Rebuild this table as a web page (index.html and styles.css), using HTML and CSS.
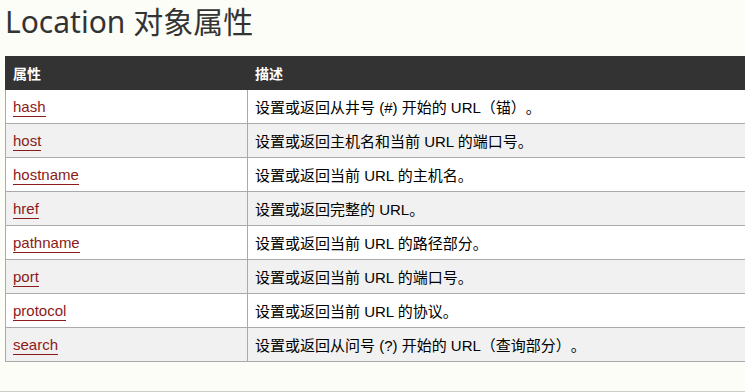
FILE: index.html
```html
<!DOCTYPE html>
<html lang="zh">
<head>
<meta charset="utf-8">
<title>Location 对象属性</title>
<link rel="stylesheet" href="styles.css">
</head>
<body>
<div class="page">
  <h2 class="title">Location 对象属性</h2>
  <table class="ref">
    <thead>
      <tr><th class="c1">属性</th><th>描述</th></tr>
    </thead>
    <tbody>
      <tr><td><a href="#">hash</a></td><td>设置或返回从井号 (#) 开始的 URL（锚）。</td></tr>
      <tr><td><a href="#">host</a></td><td>设置或返回主机名和当前 URL 的端口号。</td></tr>
      <tr><td><a href="#">hostname</a></td><td>设置或返回当前 URL 的主机名。</td></tr>
      <tr><td><a href="#">href</a></td><td>设置或返回完整的 URL。</td></tr>
      <tr><td><a href="#">pathname</a></td><td>设置或返回当前 URL 的路径部分。</td></tr>
      <tr><td><a href="#">port</a></td><td>设置或返回当前 URL 的端口号。</td></tr>
      <tr><td><a href="#">protocol</a></td><td>设置或返回当前 URL 的协议。</td></tr>
      <tr><td><a href="#">search</a></td><td>设置或返回从问号 (?) 开始的 URL（查询部分）。</td></tr>
    </tbody>
  </table>
  <hr class="sep">
</div>
</body>
</html>
```
FILE: styles.css
```css
html, body {
  margin: 0;
  padding: 0;
  background: #fdfdf8;
  overflow: hidden;
}
body {
  font-family: "Liberation Sans", "Noto Sans CJK SC", sans-serif;
  font-size: 15px;
  color: #000;
  text-spacing-trim: space-all;
}
.page {
  padding-left: 5px;
  width: 770px;
}
.title {
  margin: 0;
  padding: 2px 0 0 0;
  height: 54px;
  font-family: "Noto Sans", "Noto Sans CJK SC", sans-serif;
  font-weight: 400;
  font-size: 30px;
  line-height: 40px;
  color: #333;
}
.ref {
  width: 100%;
  border-collapse: collapse;
  border: 1px solid #aaa;
}
.ref th {
  background: #333;
  color: #fff;
  font-weight: bold;
  font-size: 14px;
  text-align: left;
  height: 33px;
  padding: 0 7px;
  border: 1px solid #333;
  box-sizing: border-box;
}
.ref .c1 {
  width: 242px;
}
.ref td {
  height: 34px;
  padding: 0 7px;
  border: 1px solid #aaa;
  box-sizing: border-box;
  vertical-align: middle;
}
.ref tbody tr:nth-child(even) td {
  background: #f1f1f1;
}
.ref tbody tr:nth-child(odd) td {
  background: #fff;
}
.ref a {
  color: #8b1a1a;
  text-decoration: none;
  border-bottom: 1px solid #8b1a1a;
  padding-bottom: 1px;
}
.sep {
  margin: 29px 0 0 -5px;
  border: 0;
  border-top: 1px solid #ccc;
  height: 0;
}
```
